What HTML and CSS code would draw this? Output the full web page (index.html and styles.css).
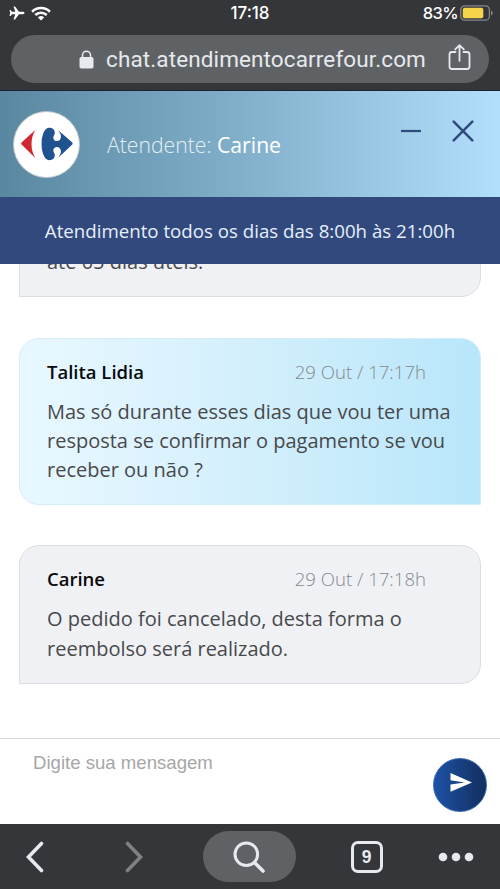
FILE: index.html
```html
<!DOCTYPE html>
<html lang="pt-BR">
<head>
<meta charset="utf-8">
<meta name="viewport" content="width=device-width, initial-scale=1">
<title>Atendimento Carrefour</title>
<link rel="stylesheet" href="styles.css">
</head>
<body>
<div class="phone">
  <div class="status">
    <div class="status-left">
      <svg width="16" height="14" viewBox="0 0 16 14"><path d="M15.500 7c0-.7-.8-1.200-1.800-1.200H10L6 .5H4.500L6.300 5.800H3L1.600 4H.5L1.200 7 .5 10h1.100L3 8.200h3.300L4.500 13.500H6l4-5.300h3.700c1 0 1.800-.5 1.800-1.200z" fill="#fff"/></svg>
      <svg width="20" height="15" viewBox="0 0 20 15"><g fill="none" stroke="#fff" stroke-width="2.600"><path d="M1.100 5.700a12.700 12.700 0 0 1 17.800 0"/><path d="M4.300 9a8.200 8.200 0 0 1 11.400 0"/></g><path d="M10 14.600 6.900 11.500a4.500 4.500 0 0 1 6.200 0z" fill="#fff"/></svg>
    </div>
    <span class="clock">17:18</span>
    <div class="status-right">
      <span class="percent">83%</span>
      <svg width="33" height="16" viewBox="0 0 33 16"><rect x=".8" y=".8" width="28.600" height="14.400" rx="4" fill="none" stroke="#85878b" stroke-width="1.300"/><rect x="2.800" y="2.800" width="20.500" height="10.400" rx="2" fill="#f5d34b"/><path d="M31 5.500q1.700.7 1.700 2.500T31 10.500z" fill="#85878b"/></svg>
    </div>
  </div>
  <div class="toolbar">
    <div class="address">
      <svg class="lock" width="15" height="19" viewBox="0 0 15 19"><path d="M3.500 8V5.200a4 4 0 0 1 8 0V8" fill="none" stroke="#e6e9ee" stroke-width="1.500"/><rect x=".5" y="7" width="14" height="11.500" rx="1.800" fill="#e6e9ee"/></svg>
      <span class="url">chat.atendimentocarrefour.com</span>
      <svg class="share" width="23" height="28" viewBox="0 0 23 28"><g fill="none" stroke="#e6e9ee" stroke-width="1.800" stroke-linecap="round" stroke-linejoin="round"><path d="M7.500 8H4a2.500 2.500 0 0 0-2.500 2.500v12A2.500 2.500 0 0 0 4 25h15a2.500 2.500 0 0 0 2.500-2.500v-12A2.500 2.500 0 0 0 19 8h-3.500"/><path d="M11.500 16.800V1.200M7.200 5.300l4.300-4.200 4.300 4.200"/></g></svg>
    </div>
  </div>
  <header class="header">
    <div class="logo">
      <svg width="52" height="34" viewBox="0 0 52 34"><path d="M14.500 2.800.8 15.200q-1.300 1.300 0 2.600L14.500 31.300Q10.500 25 10.500 17T14.500 2.800z" fill="#d0292f"/><path d="M28.300.8c3.600 0 5.500 2.300 5.500 4.900 0 2.100-1.500 3-1.500 5 0 2 1.500 3.400 3.500 3.400 2.500 0 4.100-1.700 4.100-4.400 0-2.500-1-4.200-2.900-6.600L51 15.200q1.300 1.300 0 2.600L37 30.900c1.900-2.400 2.900-4.100 2.900-6.600 0-2.700-1.600-4.400-4.100-4.400-2 0-3.500 1.400-3.500 3.400 0 2 1.500 2.900 1.500 5 0 2.600-1.900 4.900-5.500 4.900-4.800 0-7.700-7.500-7.700-16.200S23.500.8 28.300.8z" fill="#20528f"/></svg>
    </div>
    <p class="agent">Atendente: <span>Carine</span></p>
    <div class="window-actions">
      <svg width="20" height="20" viewBox="0 0 20 20"><path d="M0 10h20" stroke="#2f4a7d" stroke-width="2.200"/></svg>
      <svg width="22" height="22" viewBox="0 0 22 22"><path d="m1.700 1.700 18.600 18.600m0-18.600L1.700 20.300" stroke="#2f4a7d" stroke-width="2.500" stroke-linecap="round"/></svg>
    </div>
  </header>
  <div class="notice">Atendimento todos os dias das 8:00h às 21:00h</div>
  <main class="chat">
    <article class="message agent-message">
      <p class="text">até 05 dias úteis.</p>
    </article>
    <article class="message user-message">
      <div class="meta"><strong>Talita Lidia</strong><time>29 Out / 17:17h</time></div>
      <p class="text">Mas só durante esses dias que vou ter uma<br>resposta se confirmar o pagamento se vou<br>receber ou não ?</p>
    </article>
    <article class="message agent-message">
      <div class="meta"><strong>Carine</strong><time>29 Out / 17:18h</time></div>
      <p class="text">O pedido foi cancelado, desta forma o<br>reembolso será realizado.</p>
    </article>
  </main>
  <div class="composer">
    <span class="placeholder">Digite sua mensagem</span>
    <div class="send"><svg width="22" height="19" viewBox="0 0 22 19"><path d="M.5 0 22 9.400.5 18.800v-7.200L14.500 9.400.5 7.200z" fill="#fff"/></svg></div>
  </div>
  <nav class="browser-nav">
    <div class="nav-item"><svg width="18" height="32" viewBox="0 0 18 32"><path d="M15.500 2.500 2.500 16l13 13.500" fill="none" stroke="#e6e9ee" stroke-width="3.600" stroke-linecap="round"/></svg></div>
    <div class="nav-item"><svg width="18" height="32" viewBox="0 0 18 32"><path d="m2.500 2.500 13 13.500-13 13.500" fill="none" stroke="#7f8184" stroke-width="3.600" stroke-linecap="round"/></svg></div>
    <div class="search"><svg width="33" height="32" viewBox="0 0 33 32"><circle cx="13.300" cy="13.300" r="11.300" fill="none" stroke="#e6e9ee" stroke-width="3"/><path d="m21.500 21.500 8.500 8.500" stroke="#e6e9ee" stroke-width="3.600" stroke-linecap="round"/></svg></div>
    <div class="nav-item"><span class="tabs">9</span></div>
    <div class="nav-item"><svg width="36" height="10" viewBox="0 0 36 10"><g fill="#e6e9ee"><circle cx="5" cy="5" r="4.300"/><circle cx="18" cy="5" r="4.300"/><circle cx="31" cy="5" r="4.300"/></g></svg></div>
  </nav>
</div>
</body>
</html>
```
FILE: styles.css
```css
* { box-sizing: border-box; }
body { margin: 0; background: #fff; font-family: "Open Sans", sans-serif; }
p { margin: 0; }
svg { display: block; flex: none; }
.phone {
  display: grid;
  grid-template-rows: 26px 65px 106px 67px 474px 86px 65px;
  width: 500px;
  height: 889px;
  overflow: hidden;
}
.status {
  display: grid;
  grid-template-columns: 1fr auto 1fr;
  align-items: center;
  padding: 0 7px 0 9px;
  background: #353639;
  color: #fff;
  font: 500 17px/26px Inter, sans-serif;
}
.status-left { display: flex; align-items: center; gap: 6px; }
.status-right { display: flex; align-items: center; justify-content: flex-end; gap: 2px; }
.clock, .percent { white-space: nowrap; }
.clock { margin-left: -2px; }
.percent { font-size: 16.5px; letter-spacing: -.6px; }
.toolbar { padding: 9px 11px 8px; background: #353639; border-bottom: 1px solid #142635; }
.address {
  display: flex;
  align-items: center;
  height: 48px;
  padding: 0 18px 0 68px;
  border-radius: 24px;
  background: #5f6265;
  color: #e6e9ee;
}
.url { margin-left: 12px; font: 22.5px/48px Roboto, sans-serif; white-space: nowrap; letter-spacing: .12px; }
.share { margin: 0 0 2px auto; }
.header {
  display: flex;
  align-items: center;
  padding: 0 26px 0 13px;
  background: linear-gradient(90deg, #5a87a0, #83b1cc 50%, #b2dffb);
}
.logo {
  display: flex;
  align-items: center;
  justify-content: center;
  width: 67px;
  height: 67px;
  border: 1px solid #bcc6cd;
  border-radius: 50%;
  background: #fff;
}
.agent { margin: 1px 0 0 27px; color: #e2eff6; font-size: 21.2px; font-weight: 300; white-space: nowrap; }
.agent span { color: #fff; font-weight: 400; }
.window-actions { display: flex; align-items: center; gap: 31px; margin: 0 0 26px auto; }
.notice {
  background: #31497d;
  color: #e6effb;
  font-size: 18.7px;
  line-height: 67px;
  text-align: center;
  white-space: nowrap;
}
.chat {
  display: flex;
  flex-direction: column;
  justify-content: flex-end;
  gap: 40.5px;
  padding: 0 19px 54.5px;
  overflow: hidden;
}
.message { flex: none; padding: 17px 27px 19.5px; border: 1px solid #dcdde0; }
.agent-message { border-radius: 20px 20px 20px 0; background: #f0f1f5; }
.user-message { border-color: #d3edf8; border-radius: 20px 20px 0 20px; background: linear-gradient(90deg, #e9f8ff, #d3effc 50%, #b8e6fa); }
.meta { display: flex; justify-content: space-between; padding-right: 27px; margin-bottom: 9px; line-height: 32px; }
.meta strong { color: #08090b; font-size: 18.5px; font-weight: 600; }
.meta time { color: #83898e; font-size: 18.6px; font-weight: 300; }
.text { color: #48494c; font-size: 20px; line-height: 29.3px; white-space: nowrap; }
.composer { display: flex; justify-content: space-between; padding: 0 13px 0 33px; border-top: 1px solid #d9dadb; background: #fff; }
.placeholder { margin-top: 12px; color: #a6a6a6; font: 18.6px/24px "Liberation Sans", sans-serif; }
.send {
  display: flex;
  align-items: center;
  justify-content: center;
  width: 54px;
  height: 54px;
  margin-top: 19px;
  padding: 0 0 5px 2px;
  border: 1px solid #3a67ba;
  border-radius: 50%;
  background: linear-gradient(90deg, #1d52a5, #132f5e);
}
.browser-nav {
  display: grid;
  grid-template-columns: 70px 127px 105px 129px 50px;
  align-items: center;
  background: #353639;
}
.nav-item { display: flex; justify-content: center; }
.search { display: flex; align-items: center; justify-content: center; width: 93px; height: 51px; border-radius: 26px; background: #5f6265; justify-self: center; }
.tabs { width: 32px; height: 32px; border: 3px solid #e6e9ee; border-radius: 7px; color: #e6e9ee; font: 700 17.5px/27px "Liberation Sans", sans-serif; text-align: center; }
```
